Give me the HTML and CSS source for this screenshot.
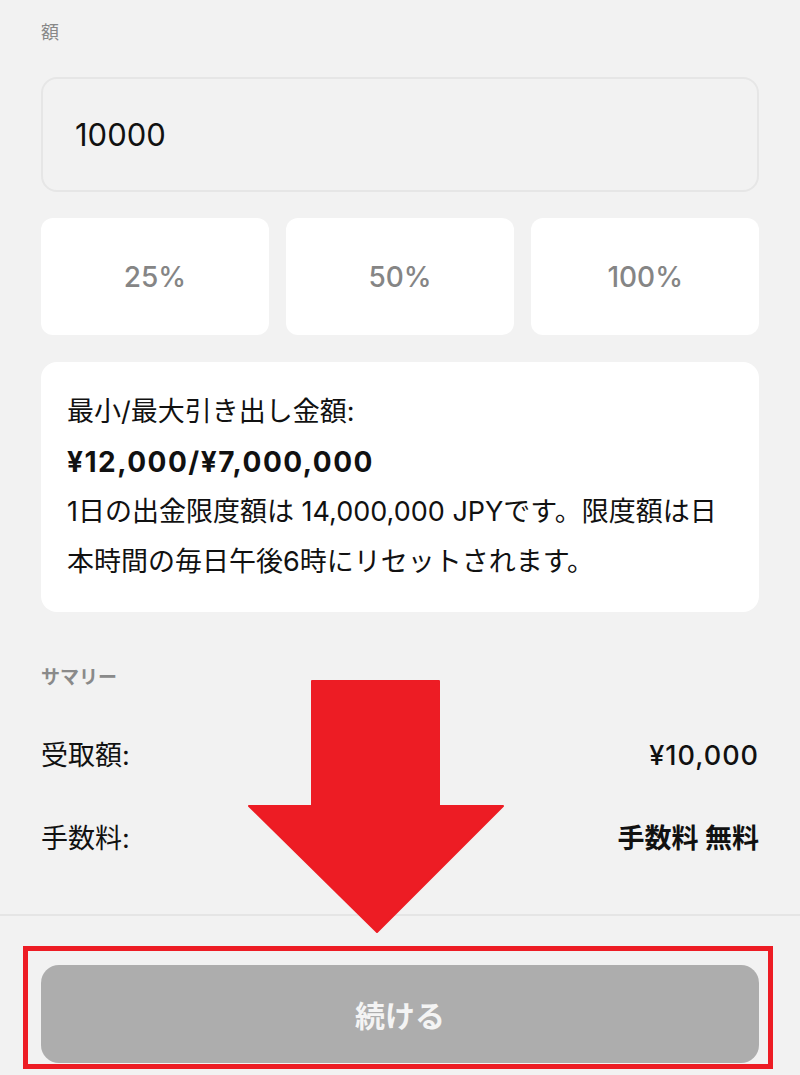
FILE: index.html
```html
<!DOCTYPE html>
<html lang="ja">
<head>
    <meta charset="UTF-8">
    <meta name="viewport" content="width=device-width, initial-scale=1.0">
    <title>出金</title>
    <link rel="stylesheet" href="styles.css">
</head>
<body>

    <div class="content">
        <!-- Amount -->
        <div class="field-label">額</div>
        <div class="amount-box">10000</div>

        <!-- Quick percent buttons -->
        <div class="percent-row">
            <button class="percent-btn">25%</button>
            <button class="percent-btn">50%</button>
            <button class="percent-btn">100%</button>
        </div>

        <!-- Limits info -->
        <div class="info-card">
            <p>最小/最大引き出し金額:</p>
            <p class="strong">¥12,000/¥7,000,000</p>
            <p>1日の出金限度額は 14,000,000 JPYです。限度額は日本時間の毎日午後6時にリセットされます。</p>
        </div>

        <!-- Summary -->
        <div class="section-label">サマリー</div>
        <div class="summary-row">
            <span>受取額:</span>
            <strong class="num">¥10,000</strong>
        </div>
        <div class="summary-row">
            <span>手数料:</span>
            <strong>手数料 無料</strong>
        </div>
    </div>

    <div class="footer">
        <button class="continue-btn">続ける</button>
    </div>

    <!-- Annotation -->
    <div class="highlight-box"></div>
    <svg class="arrow" width="260" height="256" viewBox="0 0 260 256">
        <path d="M65 2 H192 V127 H256 L130 253 L2 127 H65 Z" fill="#ed1c24" stroke="#ed1c24" stroke-width="2" stroke-linejoin="round"/>
    </svg>

</body>
</html>
```

FILE: styles.css
```css
body {
    font-family: Inter, "Noto Sans CJK JP", sans-serif;
    background-color: #f2f2f2;
    color: #111;
    margin: 0;
    position: relative;
    min-height: 1075px;
}

.content {
    padding: 21px 41px 0;
}

.field-label {
    font-size: 18px;
    line-height: 24px;
    color: #888;
}

.amount-box {
    margin-top: 32px;
    height: 111px;
    border: 2px solid #e6e6e6;
    border-radius: 16px;
    padding-left: 32px;
    display: flex;
    align-items: center;
    font-size: 31px;
    color: #111;
}

.percent-row {
    margin-top: 26px;
    display: grid;
    grid-template-columns: repeat(3, 1fr);
    gap: 17.5px;
}

.percent-btn {
    height: 117px;
    border: none;
    border-radius: 12px;
    background: #fff;
    font-family: inherit;
    font-size: 28px;
    font-weight: 500;
    color: #858585;
}

.info-card {
    margin-top: 27px;
    background: #fff;
    border-radius: 16px;
    padding: 25px 26px;
    font-size: 27px;
    line-height: 50px;
}

.info-card p {
    margin: 0;
}

.info-card .strong {
    font-size: 28px;
    font-weight: bold;
    letter-spacing: 1.5px;
}

.section-label {
    margin-top: 54px;
    font-size: 19px;
    line-height: 24px;
    font-weight: bold;
    color: #8a8a8a;
}

.summary-row {
    display: flex;
    justify-content: space-between;
    font-size: 27px;
    line-height: 34px;
    margin-top: 49px;
}

.summary-row:first-of-type {
    margin-top: 50px;
}

.summary-row .num {
    font-weight: 500;
    letter-spacing: 1px;
}

.footer {
    margin-top: 58px;
    border-top: 2px solid #e5e5e5;
    padding: 49px 41px 0;
}

.continue-btn {
    width: 100%;
    height: 98px;
    border: none;
    border-radius: 18px;
    background: #adadad;
    color: #f4f4f4;
    font-family: inherit;
    font-size: 30px;
    font-weight: bold;
}

.highlight-box {
    position: absolute;
    left: 23px;
    top: 946px;
    width: 740px;
    height: 113px;
    border: 5px solid #ed1c24;
}

.arrow {
    position: absolute;
    left: 247px;
    top: 679px;
}
```
